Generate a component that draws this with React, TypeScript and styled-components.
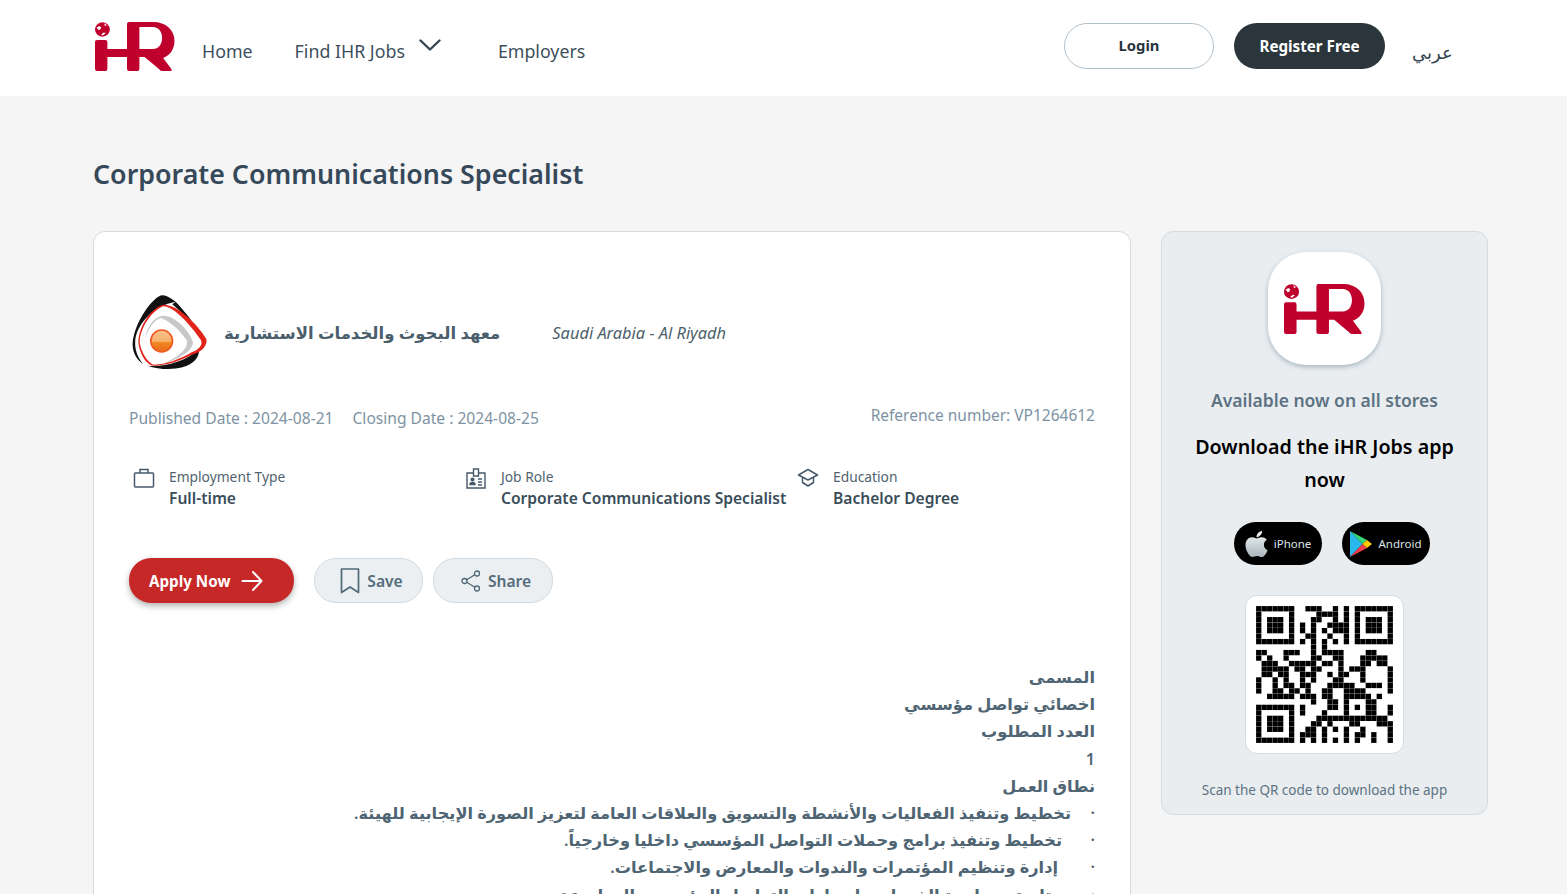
import React from "react";
import styled, { createGlobalStyle } from "styled-components";

const GlobalStyle = createGlobalStyle`
  html, body {
    margin: 0;
    padding: 0;
    background: #f5f5f5;
    font-family: "Noto Sans", "DejaVu Sans", sans-serif;
    overflow: hidden;
  }
  * { box-sizing: border-box; }
`;

// read off the reference module by module, spaces are only for legibility
const QR_ROWS = [
  "1111111 00 111 00 1 0 1 0 1111111",
  "1000001 0000 1111 0 1 0 1000001",
  "1011101 000 11 00 1 0 1 0 1011101",
  "1011101 0 1 0 1 00 1111 0 1011101",
  "1011101 0 1 0 1 0 1 0 111 0 1011101",
  "1000001 00 11 00 1 00 1 0 1000001",
  "1111111 0 1 0 1 0 1 0 1 0 1 0 1111111",
  "0000000 000 1 0 1 000000 0000000",
  "11 000 111 00 1 0 1111 0000 11 000",
  "1 0 1 00 1 0000 11 00 11 000 11111 0",
  "0 111 00 11111 0 11 0 1 000 11 0 11 0",
  "0 11111 0 11 0 11 000 1 0 111 0000 1",
  "0 11 0 11 00 111 00 1 0 11 00 1 0000 1",
  "1 00 1 0 1 00 1 0 1 000 11 000 1 0000 1",
  "1 00 1 0 11 0 11 000 11111 00 111 0 1",
  "1 00 11 0 11 0 1 00 11 00 1111 0000 1",
  "00 11111 0 111 0 11 00 11111 0 1 00",
  "0000000000 1 00 11 0 1 000 11 000",
  "1111111 0 1 0000 11 0 1 0 1 0 11 00 1",
  "1000001 0 1 000 1 000 1 000 11 00 1",
  "1011101 0000 1111111111111 0",
  "1011101 000 11 0 1 000 11 000 111",
  "1011101 00 11 0 1 0 1 0 1 00 1 0000 1",
  "1000001 0 111 0 1 000 1 0 11 0 1 00 1",
  "1111111 0 1 0 1 0 1 0 1 0 1 0 1 00 1 00 1",
].map((r) => r.replace(/ /g, ""));

const EMBLEM = "M2 18H10Q12 18 12 20V27H31V2Q31 0 33 0H56C69 0 77 8 77 19C77 27 73 33 66 36L74 47Q75 49 73 49H65Q63 49 62 47L48 35H43V47Q43 49 41 49H33Q31 49 31 47V35H12V47Q12 49 10 49H2Q0 49 0 47V20Q0 18 2 18ZM43 5V27H56C62 27 65 22 65 16C65 10 62 5 56 5Z";

const IhrLogo = ({ className }: { className?: string }) => (
  <svg className={className} viewBox="0 0 77.500 49" preserveAspectRatio="none" fill="#bf002c">
    <path fillRule="evenodd" d={EMBLEM} />
    <circle cx="7.200" cy="7.500" r="7.200" />
    <path d="M1.500 5.500 4.500 4 6 5.500 5 7.500 3.500 8ZM9 1.200l2.500 2-2 .8ZM6 12.500l2.500-2 2 .5-3 2.500Z" fill="#fff" />
  </svg>
);

const CompanyLogo = () => (
  <svg width="80" height="76" viewBox="30 25 240 228">
    <defs>
      <linearGradient id="ball" x1="0" y1="0" x2="0" y2="1">
        <stop offset="0" stopColor="#f9c38c" />
        <stop offset="0.52" stopColor="#f6b06a" />
        <stop offset="0.56" stopColor="#f08a1e" />
        <stop offset="1" stopColor="#ec6a1e" />
      </linearGradient>
    </defs>
    <path d="M130 29C105 30 48 105 41 170C39 195 50 220 72 236C56 212 46 195 49 160C58 110 105 60 170 48C155 38 142 28 130 29Z" fill="#111" />
    <path d="M170 48C200 80 232 120 242 152L237 146C215 110 190 80 160 56Z" fill="#111" />
    <path d="M240 190C242 215 225 235 190 245C160 253 120 252 85 240C130 245 200 230 240 190Z" fill="#111" />
    <path d="M78 160C84 125 102 95 130 90C170 88 215 140 222 170C222 195 180 222 125 236C180 215 207 190 204 165C180 130 150 105 125 97C102 105 88 130 78 160Z" fill="#c8c8c8" />
    <path d="M58 168C60 120 95 70 130 58C170 52 235 115 262 160C266 178 250 198 222 206C180 228 140 240 105 240C82 240 60 200 58 168ZM62 168C65 198 88 234 106 237C140 237 180 222 218 200C240 192 252 178 246 164C220 125 165 60 132 62C100 75 65 122 62 168Z" fill="#e2231a" fillRule="evenodd" />
    <circle cx="128" cy="166" r="35" fill="#ef5a24" />
    <ellipse cx="128" cy="166" rx="30" ry="31" fill="url(#ball)" />
  </svg>
);

const Chevron = () => (
  <ChevronSvg viewBox="0 0 22 13" fill="none" stroke="#35454f" strokeWidth="2.400" strokeLinecap="round" strokeLinejoin="round">
    <path d="M1.500 1.500 11 10.500 20.500 1.500" />
  </ChevronSvg>
);

const Briefcase = () => (
  <svg width="22" height="20" viewBox="0 0 22 20" fill="none" stroke="#46596a" strokeWidth="1.500">
    <rect x="1.500" y="5" width="19" height="14" rx="1" />
    <path d="M7 5V1.500h8V5" />
  </svg>
);

const IdCard = () => (
  <svg width="22" height="22" viewBox="0 0 22 22" fill="none" stroke="#46596a" strokeWidth="1.400">
    <path d="M8 5H2v15h18V5h-6" />
    <path d="M8.500 1h5v7h-5z" />
    <circle cx="7.500" cy="11.500" r="1.400" fill="#46596a" />
    <path d="M5 16.500c0-2.600 5-2.600 5 0ZM13 11h4M13 14h4M13 17h4" fill="#46596a" />
  </svg>
);

const GradCap = () => (
  <svg width="22" height="20" viewBox="0 0 22 20" fill="none" stroke="#46596a" strokeWidth="1.500" strokeLinejoin="round">
    <path d="M11 1.500 20.500 7 11 12 1.500 7Z" />
    <path d="M5.500 9.500v5L11 18l5.500-3.500v-5" />
  </svg>
);

const Arrow = () => (
  <svg width="22" height="20" viewBox="0 0 22 20" fill="none" stroke="#fff" strokeWidth="2" strokeLinecap="round" strokeLinejoin="round">
    <path d="M1.500 10h19M12 1l8.500 9-8.500 9" />
  </svg>
);

const Bookmark = () => (
  <svg width="20" height="26" viewBox="0 0 20 26" fill="none" stroke="#4f6878" strokeWidth="1.700" strokeLinejoin="round">
    <path d="M1.500 1h17v23.500L10 19l-8.500 5.500Z" />
  </svg>
);

const ShareIcon = () => (
  <svg width="20" height="22" viewBox="0 0 20 22" fill="none" stroke="#4f6878" strokeWidth="1.300">
    <circle cx="16" cy="3.500" r="2.500" />
    <circle cx="3.500" cy="11" r="2.500" />
    <circle cx="16" cy="18.500" r="2.500" />
    <path d="M5.700 9.700 13.800 4.800M5.700 12.300l8.100 4.900" />
  </svg>
);

const AppleIcon = () => (
  <svg width="23" height="30" viewBox="0 0 384 512">
    <defs>
      <linearGradient id="apple" x1="0" y1="0" x2="0" y2="1">
        <stop offset="0" stopColor="#f4f6f7" />
        <stop offset="1" stopColor="#a9b6bc" />
      </linearGradient>
    </defs>
    <path fill="url(#apple)" d="M318.700 268.700c-.2-36.700 16.400-64.400 50-84.800-18.800-26.900-47.200-41.700-84.700-44.600-35.500-2.800-74.300 20.700-88.500 20.700-15 0-49.400-19.700-76.400-19.700C63.300 141.200 4 184.800 4 273.500q0 39.300 14.400 81.200c12.800 36.700 59 126.700 107.200 125.200 25.200-.6 43-17.900 75.800-17.900 31.800 0 48.300 17.900 76.400 17.900 48.600-.7 90.400-82.500 102.600-119.300-65.200-30.700-61.700-90-61.700-91.900zm-56.600-164.200c27.300-32.400 24.800-61.900 24-72.500-24.100 1.400-52 16.400-67.900 34.900-17.500 19.800-27.800 44.300-25.600 71.900 26.100 2 49.900-11.400 69.500-34.300z" />
  </svg>
);

const PlayIcon = () => (
  <svg width="22" height="26" viewBox="0 0 22 26">
    <path d="M0 0 12.500 13 0 26Z" fill="#2ab7ec" />
    <path d="M0 0 17 9l-4.500 4Z" fill="#38d87a" />
    <path d="M0 26 17 17l-4.500-4Z" fill="#ef3f4e" />
    <path d="M17 9l5 4-5 4-4.500-4Z" fill="#ffc900" />
  </svg>
);

const QrCode = () => (
  <svg width="137" height="137" viewBox="0 0 25 25">
    {QR_ROWS.map((row, y) =>
      row.split("").map((cell, x) =>
        cell === "1" ? <rect key={`${x}-${y}`} x={x + 0.015} y={y + 0.015} width="0.97" height="0.97" fill="#000" /> : null
      )
    )}
  </svg>
);

const META = [
  { icon: <Briefcase />, label: "Employment Type", value: "Full-time", width: 332 },
  { icon: <IdCard />, label: "Job Role", value: "Corporate Communications Specialist", width: 332 },
  { icon: <GradCap />, label: "Education", value: "Bachelor Degree", width: 300 },
];

const BULLETS = [
  { text: "تخطيط وتنفيذ الفعاليات والأنشطة والتسويق والعلاقات العامة لتعزيز الصورة الإيجابية للهيئة.", indent: 24 },
  { text: "تخطيط وتنفيذ برامج وحملات التواصل المؤسسي داخليا وخارجياً.", indent: 33 },
  { text: "إدارة وتنظيم المؤتمرات والندوات والمعارض والاجتماعات.", indent: 37 },
  { text: "متابعة ومراجعة الخدمات وإصدارات التواصل المؤسسي المطبوعة", indent: 33 },
];

const App = () => {
  return (
    <Page>
      <GlobalStyle />
      <Header>
        <HeaderLogo />
        <Nav>
          <NavLink>Home</NavLink>
          <NavLink>Find IHR Jobs<Chevron /></NavLink>
          <NavLink>Employers</NavLink>
        </Nav>
        <Actions>
          <LoginButton>Login</LoginButton>
          <RegisterButton>Register Free</RegisterButton>
          <Lang>عربي</Lang>
        </Actions>
      </Header>

      <Main>
        <Title>Corporate Communications Specialist</Title>
        <Columns>
          <JobCard>
            <CompanyRow>
              <CompanyLogo />
              <CompanyName>معهد البحوث والخدمات الاستشارية</CompanyName>
              <Location>Saudi Arabia - Al Riyadh</Location>
            </CompanyRow>
            <DatesRow>
              <Dates>
                <span>Published Date : 2024-08-21</span>
                <span>Closing Date : 2024-08-25</span>
              </Dates>
              <Reference>Reference number: VP1264612</Reference>
            </DatesRow>
            <MetaRow>
              {META.map((m) => (
                <MetaItem key={m.label} $width={m.width}>
                  <MetaIcon>{m.icon}</MetaIcon>
                  <div>
                    <MetaLabel>{m.label}</MetaLabel>
                    <MetaValue>{m.value}</MetaValue>
                  </div>
                </MetaItem>
              ))}
            </MetaRow>
            <ButtonRow>
              <ApplyButton>Apply Now<Arrow /></ApplyButton>
              <GhostButton $width={109}><Bookmark />Save</GhostButton>
              <GhostButton $width={120}><ShareIcon />Share</GhostButton>
            </ButtonRow>
            <Body dir="rtl">
              <BodyLine>المسمى</BodyLine>
              <BodyLine>اخصائي تواصل مؤسسي</BodyLine>
              <BodyLine>العدد المطلوب</BodyLine>
              <BodyLine>1</BodyLine>
              <BodyLine>نطاق العمل</BodyLine>
              {BULLETS.map((b) => (
                <BulletLine key={b.text} $indent={b.indent}>{b.text}</BulletLine>
              ))}
            </Body>
          </JobCard>

          <SideCard>
            <AppIcon><AppIconLogo /></AppIcon>
            <Available>Available now on all stores</Available>
            <DownloadTitle>Download the iHR Jobs app now</DownloadTitle>
            <Stores>
              <StoreButton><AppleIcon /><span>iPhone</span></StoreButton>
              <StoreButton><PlayIcon /><span>Android</span></StoreButton>
            </Stores>
            <QrBox><QrCode /></QrBox>
            <ScanText>Scan the QR code to download the app</ScanText>
          </SideCard>
        </Columns>
      </Main>
    </Page>
  );
};

const Page = styled.div`
  height: 100vh;
  overflow: hidden;
`;

const Header = styled.header`
  height: 96px;
  background: #fff;
  display: flex;
  align-items: flex-start;
  padding: 22px 115px 0 95px;
`;

const HeaderLogo = styled(IhrLogo)`
  width: 80px;
  height: 49px;
  flex: none;
`;

const Nav = styled.nav`
  display: flex;
  gap: 42px;
  margin-left: 27px;
  padding-top: 17px;
`;

const NavLink = styled.a`
  display: flex;
  align-items: flex-start;
  font-size: 17.800px;
  line-height: 24px;
  color: #3d4f5c;
`;

const ChevronSvg = styled.svg`
  width: 22px;
  height: 13px;
  margin: 0 15px 0 14px;
`;

const Actions = styled.div`
  display: flex;
  align-items: flex-start;
  margin-left: auto;
  padding-top: 1px;
`;

const LoginButton = styled.button`
  width: 150px;
  height: 46px;
  padding-bottom: 3px;
  border: 1px solid #b4c2cc;
  border-radius: 23px;
  background: #fff;
  color: #29343c;
  font: 700 14.800px "Noto Sans", sans-serif;
`;

const RegisterButton = styled.button`
  width: 151px;
  height: 46px;
  margin-left: 20px;
  border: none;
  border-radius: 23px;
  background: #2a353c;
  color: #fff;
  font: 700 15.200px "Noto Sans", sans-serif;
`;

const Lang = styled.span`
  width: 40px;
  margin-left: 27px;
  margin-top: 15px;
  font-size: 18px;
  line-height: 28px;
  color: #33434e;
`;

const Main = styled.main`
  padding: 57px 79px 0 93px;
`;

const Title = styled.h1`
  margin: 0 0 37px;
  font-size: 26.800px;
  line-height: 41px;
  font-weight: 600;
  color: #36495a;
`;

const Columns = styled.div`
  display: flex;
  align-items: flex-start;
  gap: 30px;
`;

const JobCard = styled.section`
  width: 1038px;
  flex: none;
  height: 800px;
  background: #fff;
  border: 1px solid #d3dce2;
  border-radius: 12px;
  padding: 62px 35px 0;
`;

const CompanyRow = styled.div`
  display: flex;
  align-items: center;
  height: 76px;
`;

const CompanyName = styled.div`
  margin-left: 15px;
  font-size: 16.500px;
  font-weight: 600;
  color: #4b5e6b;
`;

const Location = styled.div`
  margin-left: 52px;
  font-size: 16.400px;
  font-style: italic;
  color: #4d5f6c;
`;

const DatesRow = styled.div`
  display: flex;
  justify-content: space-between;
  align-items: flex-start;
  margin-top: 33px;
`;

const Dates = styled.div`
  display: flex;
  gap: 19px;
  padding-top: 3px;
  font-size: 15.600px;
  line-height: 24px;
  color: #7d93a3;
`;

const Reference = styled.div`
  font-size: 15.500px;
  line-height: 24px;
  color: #7d93a3;
`;

const MetaRow = styled.div`
  display: flex;
  margin-top: 37px;
`;

const MetaItem = styled.div<{ $width: number }>`
  display: flex;
  width: ${(p) => p.$width}px;
`;

const MetaIcon = styled.div`
  width: 40px;
  padding: 1px 0 0 4px;
  flex: none;
`;

const MetaLabel = styled.div`
  font-size: 13.800px;
  line-height: 20px;
  color: #52636f;
`;

const MetaValue = styled.div`
  font-size: 15.600px;
  line-height: 22px;
  font-weight: 600;
  color: #3a4d5a;
  white-space: nowrap;
`;

const ButtonRow = styled.div`
  display: flex;
  gap: 10px;
  margin-top: 49px;
`;

const ApplyButton = styled.button`
  display: flex;
  align-items: center;
  gap: 11px;
  width: 165px;
  height: 45px;
  margin-right: 10px;
  padding: 0 0 0 20px;
  border: none;
  border-radius: 22px;
  background: #c62828;
  box-shadow: 0 3px 6px rgba(0, 0, 0, 0.3);
  color: #fff;
  font: 700 15.200px "Noto Sans", sans-serif;
`;

const GhostButton = styled.button<{ $width: number }>`
  display: flex;
  align-items: center;
  justify-content: center;
  gap: 7px;
  width: ${(p) => p.$width}px;
  height: 45px;
  padding: 0 0 0 6px;
  border: 1px solid #d0dae0;
  border-radius: 22px;
  background: #ebeff2;
  color: #566c7b;
  font: 600 15.600px "Noto Sans", sans-serif;
`;

const Body = styled.div`
  margin-top: 61px;
  font-size: 16.200px;
  line-height: 27.200px;
  font-weight: 600;
  color: #4f6573;
`;

const BodyLine = styled.div``;

const BulletLine = styled.div<{ $indent: number }>`
  position: relative;
  padding-right: ${(p) => p.$indent}px;
  &::before {
    content: "·";
    position: absolute;
    right: 0;
  }
`;

const SideCard = styled.aside`
  width: 327px;
  flex: none;
  height: 584px;
  display: flex;
  flex-direction: column;
  align-items: center;
  padding-top: 20px;
  background: #e9edf0;
  border: 1px solid #d3dce2;
  border-radius: 12px;
`;

const AppIcon = styled.div`
  width: 113px;
  height: 113px;
  display: flex;
  align-items: center;
  justify-content: center;
  background: #fff;
  border-radius: 38px;
  box-shadow: 0 2px 5px rgba(70, 100, 120, 0.4);
`;

const AppIconLogo = styled(IhrLogo)`
  width: 81px;
  height: 50px;
`;

const Available = styled.div`
  margin-top: 22px;
  font-size: 17.500px;
  line-height: 26px;
  font-weight: 600;
  color: #5d7383;
`;

const DownloadTitle = styled.div`
  width: 270px;
  margin-top: 17px;
  font-size: 19.700px;
  line-height: 33px;
  font-weight: 600;
  text-align: center;
  color: #000;
`;

const Stores = styled.div`
  display: flex;
  gap: 20px;
  margin: 26px 0 0 15px;
`;

const StoreButton = styled.div`
  width: 88px;
  height: 43px;
  display: flex;
  align-items: center;
  justify-content: center;
  gap: 6px;
  border-radius: 22px;
  background: #000;
  color: #dfe3e5;
  font-size: 11.500px;
`;

const QrBox = styled.div`
  width: 159px;
  height: 159px;
  display: flex;
  align-items: center;
  justify-content: center;
  margin-top: 30px;
  background: #fff;
  border: 1px solid #d3dce2;
  border-radius: 12px;
`;

const ScanText = styled.div`
  margin-top: 27px;
  font-size: 13.500px;
  line-height: 18px;
  color: #5d7383;
`;

export default App;
